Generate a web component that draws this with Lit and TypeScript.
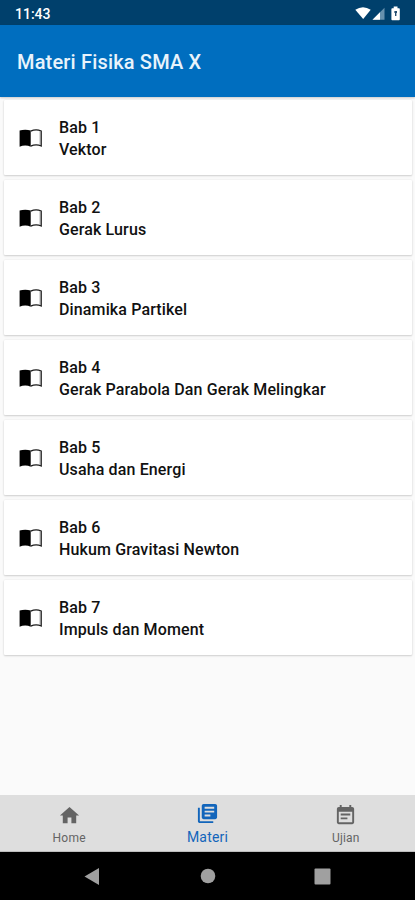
import { LitElement, html, css, svg } from "lit";
import { customElement, property } from "lit/decorators.js";

interface Chapter {
  label: string;
  title: string;
}

const chapters: Chapter[] = [
  { label: "Bab 1", title: "Vektor" },
  { label: "Bab 2", title: "Gerak Lurus" },
  { label: "Bab 3", title: "Dinamika Partikel" },
  { label: "Bab 4", title: "Gerak Parabola Dan Gerak Melingkar" },
  { label: "Bab 5", title: "Usaha dan Energi" },
  { label: "Bab 6", title: "Hukum Gravitasi Newton" },
  { label: "Bab 7", title: "Impuls dan Moment" },
];

const homeIcon = svg`<path d="M10 20v-6h4v6h5v-8h3L12 3 2 12h3v8z"/>`;
const libraryIcon = svg`<path d="M4 6H2v14c0 1.100.9 2 2 2h14v-2H4V6z"/><path fill-rule="evenodd" d="M20 2H8c-1.100 0-2 .9-2 2v12c0 1.100.9 2 2 2h12c1.100 0 2-.9 2-2V4c0-1.100-.9-2-2-2zM19 11H9V9h10zM15 15H9v-2h6zM19 7H9V5h10z"/>`;
const noteIcon = svg`<path d="M17 10H7v2h10v-2zm2-7h-1V1h-2v2H8V1H6v2H5c-1.110 0-1.990.9-1.990 2L3 19c0 1.100.89 2 2 2h14c1.100 0 2-.9 2-2V5c0-1.100-.9-2-2-2zm0 16H5V8h14v11zm-5-5H7v2h7v-2z"/>`;

@customElement("chapter-card")
export class ChapterCard extends LitElement {
  @property() label = "";
  @property() heading = "";

  static styles = css`
    :host {
      display: flex;
      align-items: center;
      height: 75px;
      box-sizing: border-box;
      padding-left: 15px;
      background: #fff;
      border-radius: 1px;
      box-shadow: 0 1px 2px rgba(0, 0, 0, 0.16), 0 0 2px rgba(0, 0, 0, 0.08);
    }
    .book {
      width: 24px;
      height: 20px;
      margin-top: 1px;
      flex: none;
    }
    .text {
      margin-left: 16px;
      padding-top: 3px;
      font-weight: 500;
      font-size: 16px;
      line-height: 22px;
      letter-spacing: 0.13px;
      color: #111;
      white-space: nowrap;
    }
  `;

  render() {
    return html`
      <svg class="book" viewBox="0 0 24 20">
        <path d="M0.600 2.600C4 1.300 8.500 1.300 11.700 2.600V18.800C8.500 17.200 4 17.200 0.600 18.800Z" fill="#000" />
        <path d="M11.700 3.200C15 1.700 19 1.700 22.200 3V18C19 16.700 15 16.700 11.700 18.200" fill="none" stroke="#1c1c1c" stroke-width="1.300" />
        <path d="M21.100 3V17" stroke="#888" stroke-width="0.800" />
      </svg>
      <div class="text">
        <div>${this.label}</div>
        <div>${this.heading}</div>
      </div>
    `;
  }
}

@customElement("app-root")
export class AppRoot extends LitElement {
  static styles = css`
    :host {
      display: flex;
      flex-direction: column;
      width: 415px;
      height: 900px;
      overflow: hidden;
      background: #fafafa;
      font-family: Roboto, "Liberation Sans", sans-serif;
    }
    .status {
      height: 25px;
      flex: none;
      box-sizing: border-box;
      display: flex;
      align-items: center;
      justify-content: space-between;
      padding: 2px 12px 0 15px;
      background: #00406c;
      color: #fff;
      font-size: 14px;
      font-weight: 500;
    }
    .signals {
      width: 48px;
      height: 16px;
    }
    .bar {
      height: 72px;
      flex: none;
      box-sizing: border-box;
      padding: 2px 0 0 17px;
      display: flex;
      align-items: center;
      background: #006ebf;
      color: #e9f3fb;
      font-size: 20px;
      letter-spacing: 0.17px;
      font-weight: 500;
      box-shadow: 0 1px 2px rgba(0, 0, 0, 0.2);
    }
    .list {
      flex: 1;
      display: flex;
      flex-direction: column;
      gap: 5px;
      padding: 3px 3px 0 4px;
    }
    .tabs {
      height: 57px;
      flex: none;
      box-sizing: border-box;
      display: grid;
      grid-template-columns: repeat(3, 1fr);
      background: #dedede;
      border-bottom: 1px solid #bdbdbd;
    }
    .tab {
      display: flex;
      flex-direction: column;
      align-items: center;
      padding-top: 9px;
      color: #646464;
      font-size: 12px;
      line-height: 16px;
      letter-spacing: 0.2px;
    }
    .tab svg {
      width: 23px;
      height: 23px;
      fill: currentColor;
      margin-bottom: 3px;
    }
    .tab.active {
      padding-top: 7px;
      color: #1265bb;
      font-size: 14px;
    }
    .tab.active svg {
      margin-bottom: 4px;
    }
    .system {
      height: 48px;
      flex: none;
      background: #000;
      display: flex;
      align-items: center;
      justify-content: center;
    }
    .keys {
      width: 415px;
      height: 48px;
    }
  `;

  render() {
    return html`
      <div class="status">
        <span>11:43</span>
        <svg class="signals" viewBox="0 0 48 16">
          <path d="M0.300 3.800Q8 -1.300 15.700 3.800L8.200 13Z" fill="#fff" />
          <path d="M17.500 13.800L29.500 1.800V13.800Z" fill="#6690ad" />
          <path d="M17.500 13.800L25 6.300V13.800Z" fill="#fff" />
          <path d="M37.200 2.300H38.700V0.500H42.500V2.300H44Q44.800 2.300 44.800 3.300V13.300Q44.800 14.300 44 14.300H37.200Q36.400 14.300 36.400 13.300V3.300Q36.400 2.300 37.200 2.300Z" fill="#fff" />
          <path d="M39.400 5H42V7H41.400V10H40V7H39.400Z" fill="#234d70" />
        </svg>
      </div>
      <div class="bar">Materi Fisika SMA X</div>
      <div class="list">
        ${chapters.map(
          (c) => html`<chapter-card .label=${c.label} .heading=${c.title}></chapter-card>`
        )}
      </div>
      <div class="tabs">
        <div class="tab"><svg viewBox="0 0 24 24">${homeIcon}</svg><span>Home</span></div>
        <div class="tab active"><svg viewBox="0 0 24 24">${libraryIcon}</svg><span>Materi</span></div>
        <div class="tab"><svg viewBox="0 0 24 24">${noteIcon}</svg><span>Ujian</span></div>
      </div>
      <div class="system">
        <svg class="keys" viewBox="0 0 415 48" fill="#a0a0a0">
          <path d="M84.500 24.500L99 16V33Z" />
          <circle cx="208" cy="24" r="7.300" />
          <rect x="314.500" y="16.500" width="16" height="16" rx="1" />
        </svg>
      </div>
    `;
  }
}
